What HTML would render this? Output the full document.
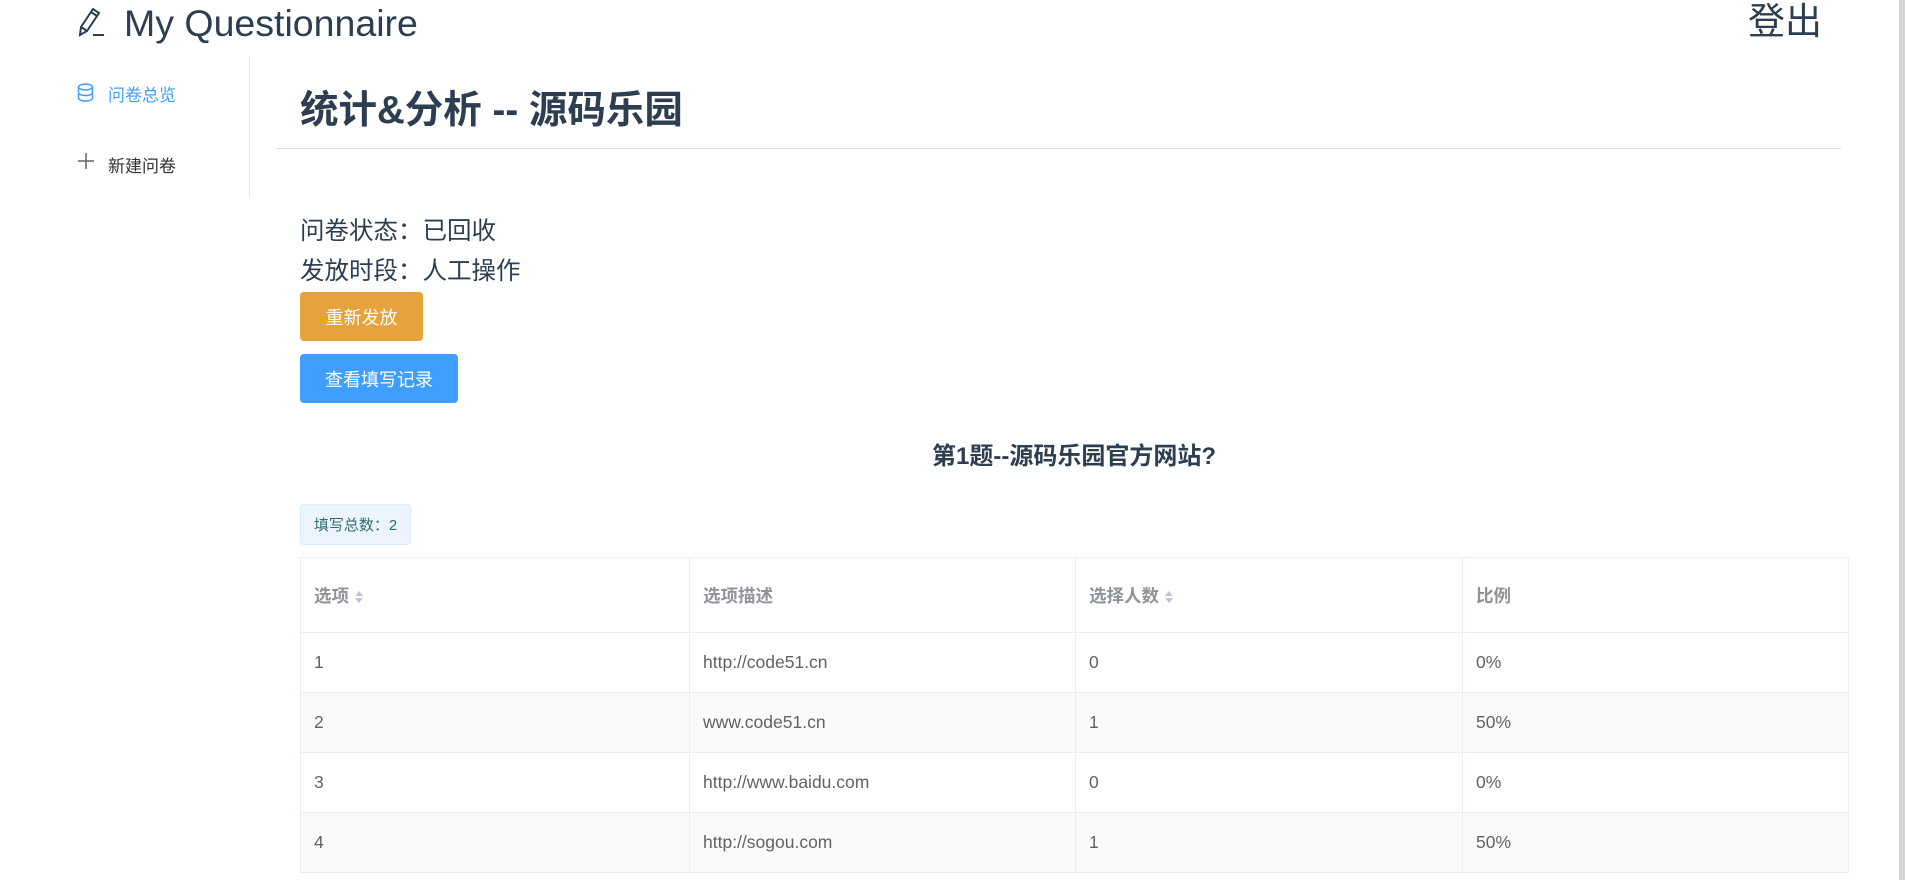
<!DOCTYPE html>
<html><head><meta charset="utf-8"><style>
*{margin:0;padding:0;box-sizing:border-box}
body{width:1905px;height:880px;overflow:hidden;background:#fff;font-family:"Liberation Sans","Noto Sans CJK SC",sans-serif;color:#2c3e50;position:relative}
.abs{position:absolute}
.logo{left:124px;top:1px;font-size:37.5px;line-height:44px;white-space:nowrap}
.logout{left:1748px;top:0;font-size:37px;line-height:44px}
.side{left:249px;top:56px;width:1px;height:141px;background:#e6e6e6}
.nav{font-size:17px;white-space:nowrap}
h1{position:absolute;left:300px;top:87px;font-size:38.5px;font-weight:bold;line-height:48px;white-space:nowrap}
.hr{left:276px;top:148px;width:1565px;height:1px;background:#dcdfe6}
.st{left:300px;font-size:24.5px;line-height:32px}
.btn{color:#fff;font-size:18px;border-radius:4px;display:flex;align-items:center;justify-content:center}
.qt{left:0;width:2148px;text-align:center;top:441px;font-size:24px;font-weight:bold;line-height:32px}
.tag{left:300px;top:504px;width:111px;height:41px;background:#ecf5ff;border:1px solid #d9ecff;border-radius:4px;color:#2f6f6a;font-size:15px;display:flex;align-items:center;justify-content:center}
table{position:absolute;left:300px;top:557px;width:1549px;border-collapse:collapse;font-size:17.5px;color:#606266}
td{border:1px solid #ebeef5;height:60px;padding-left:13px}
tr.h td{height:75px;color:#909399;font-weight:bold}
tr.s td{background:#fafafa}
.sort{display:inline-block;vertical-align:middle;margin-left:6px;width:8px;height:14px;position:relative}
.sort:before{content:"";position:absolute;top:1px;left:0;border:4px solid transparent;border-bottom:5px solid #c0c4cc;border-top:0}
.sort:after{content:"";position:absolute;bottom:1px;left:0;border:4px solid transparent;border-top:5px solid #c0c4cc;border-bottom:0}
.sb{left:1899px;top:0;width:6px;height:880px;background:#d6d6d6}
</style></head><body>
<svg class="abs" style="left:76px;top:6px" width="30" height="32" viewBox="0 0 30 32" fill="none" stroke="#2c3e50" stroke-width="2"><path d="M4 29 L5 21 L17 3 L23 7 L11 25 Z M5 21 L11 25 M15 6 L21 10"/><path d="M17 29 H28"/></svg>
<div class="abs logo">My Questionnaire</div>
<div class="abs logout">登出</div>
<div class="abs side"></div>
<svg class="abs" style="left:77px;top:83px" width="17" height="19" viewBox="0 0 17 19" fill="none" stroke="#409eff" stroke-width="1.5"><ellipse cx="8.5" cy="4" rx="7" ry="3"/><path d="M1.5 4v11c0 1.7 3 3 7 3s7-1.3 7-3V4M1.5 9.5c0 1.7 3 3 7 3s7-1.3 7-3"/></svg>
<div class="abs nav" style="left:108px;top:81px;color:#409eff">问卷总览</div>
<svg class="abs" style="left:77px;top:152px" width="18" height="18" viewBox="0 0 18 18" stroke="#606266" stroke-width="1.5"><path d="M9 1v16M1 9h16"/></svg>
<div class="abs nav" style="left:108px;top:152px;color:#303133">新建问卷</div>
<h1>统计&amp;分析 -- 源码乐园</h1>
<div class="abs hr"></div>
<div class="abs st" style="top:216px">问卷状态：已回收</div>
<div class="abs st" style="top:256px">发放时段：人工操作</div>
<div class="abs btn" style="left:300px;top:292px;width:123px;height:49px;background:#e6a23c">重新发放</div>
<div class="abs btn" style="left:300px;top:354px;width:158px;height:49px;background:#409eff">查看填写记录</div>
<div class="abs qt">第1题--源码乐园官方网站?</div>
<div class="abs tag">填写总数：2</div>
<table>
<tr class="h"><td style="width:389px">选项<span class="sort"></span></td><td style="width:386px">选项描述</td><td style="width:387px">选择人数<span class="sort"></span></td><td>比例</td></tr>
<tr><td>1</td><td>http://code51.cn</td><td>0</td><td>0%</td></tr>
<tr class="s"><td>2</td><td>www.code51.cn</td><td>1</td><td>50%</td></tr>
<tr><td>3</td><td>http://www.baidu.com</td><td>0</td><td>0%</td></tr>
<tr class="s"><td>4</td><td>http://sogou.com</td><td>1</td><td>50%</td></tr>
</table>
<div class="abs sb"></div>
</body></html>
